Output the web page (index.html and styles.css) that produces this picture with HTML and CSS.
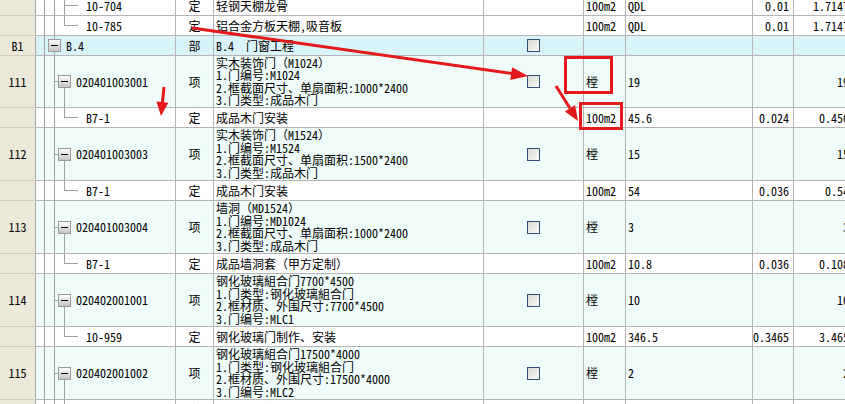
FILE: index.html
```html
<!DOCTYPE html>
<html lang="zh-CN">
<head>
<meta charset="utf-8">
<title>清单</title>
<link rel="stylesheet" href="styles.css">
</head>
<body>
<div class="grid">
  <div class="row">
    <div class="c num"></div>
    <div class="c tree t-de t-cont"><span>10-704</span></div>
    <div class="c type">定</div>
    <div class="c desc">轻钢天棚龙骨</div>
    <div class="c chk"></div>
    <div class="c unit">100m2</div>
    <div class="c qty">QDL</div>
    <div class="c v1">0.01</div>
    <div class="c v2">1.7147</div>
  </div>
  <div class="row">
    <div class="c num"></div>
    <div class="c tree t-de"><span>10-785</span></div>
    <div class="c type">定</div>
    <div class="c desc">铝合金方板天棚,吸音板</div>
    <div class="c chk"></div>
    <div class="c unit">100m2</div>
    <div class="c qty">QDL</div>
    <div class="c v1">0.01</div>
    <div class="c v2">1.7147</div>
  </div>
  <div class="row bu">
    <div class="c num">B1</div>
    <div class="c tree t-bu"><span class="exp"></span><span class="lbl">B.4</span></div>
    <div class="c type">部</div>
    <div class="c desc">B.4  门窗工程</div>
    <div class="c chk"><span class="cb"></span></div>
    <div class="c unit"></div>
    <div class="c qty"></div>
    <div class="c v1"></div>
    <div class="c v2"></div>
  </div>
  <div class="row xiang tall h52">
    <div class="c num">111</div>
    <div class="c tree t-xm"><span class="exp"></span><span class="lbl">020401003001</span></div>
    <div class="c type">项</div>
    <div class="c desc multi"><span>实木装饰门（M1024）</span><span>1.门编号:M1024</span><span>2.框截面尺寸、单扇面积:1000*2400</span><span>3.门类型:成品木门</span></div>
    <div class="c chk"><span class="cb"></span></div>
    <div class="c unit">樘</div>
    <div class="c qty">19</div>
    <div class="c v1"></div>
    <div class="c v2">19</div>
  </div>
  <div class="row">
    <div class="c num"></div>
    <div class="c tree t-de"><span>B7-1</span></div>
    <div class="c type">定</div>
    <div class="c desc">成品木门安装</div>
    <div class="c chk"></div>
    <div class="c unit">100m2</div>
    <div class="c qty">45.6</div>
    <div class="c v1">0.024</div>
    <div class="c v2">0.456</div>
  </div>
  <div class="row xiang tall">
    <div class="c num">112</div>
    <div class="c tree t-xm"><span class="exp"></span><span class="lbl">020401003003</span></div>
    <div class="c type">项</div>
    <div class="c desc multi"><span>实木装饰门（M1524）</span><span>1.门编号:M1524</span><span>2.框截面尺寸、单扇面积:1500*2400</span><span>3.门类型:成品木门</span></div>
    <div class="c chk"><span class="cb"></span></div>
    <div class="c unit">樘</div>
    <div class="c qty">15</div>
    <div class="c v1"></div>
    <div class="c v2">15</div>
  </div>
  <div class="row">
    <div class="c num"></div>
    <div class="c tree t-de"><span>B7-1</span></div>
    <div class="c type">定</div>
    <div class="c desc">成品木门安装</div>
    <div class="c chk"></div>
    <div class="c unit">100m2</div>
    <div class="c qty">54</div>
    <div class="c v1">0.036</div>
    <div class="c v2">0.54</div>
  </div>
  <div class="row xiang tall">
    <div class="c num">113</div>
    <div class="c tree t-xm"><span class="exp"></span><span class="lbl">020401003004</span></div>
    <div class="c type">项</div>
    <div class="c desc multi"><span>墙洞（MD1524）</span><span>1.门编号:MD1024</span><span>2.框截面尺寸、单扇面积:1000*2400</span><span>3.门类型:成品木门</span></div>
    <div class="c chk"><span class="cb"></span></div>
    <div class="c unit">樘</div>
    <div class="c qty">3</div>
    <div class="c v1"></div>
    <div class="c v2">3</div>
  </div>
  <div class="row">
    <div class="c num"></div>
    <div class="c tree t-de"><span>B7-1</span></div>
    <div class="c type">定</div>
    <div class="c desc">成品墙洞套（甲方定制）</div>
    <div class="c chk"></div>
    <div class="c unit">100m2</div>
    <div class="c qty">10.8</div>
    <div class="c v1">0.036</div>
    <div class="c v2">0.108</div>
  </div>
  <div class="row xiang tall">
    <div class="c num">114</div>
    <div class="c tree t-xm"><span class="exp"></span><span class="lbl">020402001001</span></div>
    <div class="c type">项</div>
    <div class="c desc multi"><span>钢化玻璃組合门7700*4500</span><span>1.门类型:钢化玻璃組合门</span><span>2.框材质、外围尺寸:7700*4500</span><span>3.门编号:MLC1</span></div>
    <div class="c chk"><span class="cb"></span></div>
    <div class="c unit">樘</div>
    <div class="c qty">10</div>
    <div class="c v1"></div>
    <div class="c v2">10</div>
  </div>
  <div class="row">
    <div class="c num"></div>
    <div class="c tree t-de"><span>10-959</span></div>
    <div class="c type">定</div>
    <div class="c desc">钢化玻璃门制作、安装</div>
    <div class="c chk"></div>
    <div class="c unit">100m2</div>
    <div class="c qty">346.5</div>
    <div class="c v1">0.3465</div>
    <div class="c v2">3.465</div>
  </div>
  <div class="row xiang tall">
    <div class="c num">115</div>
    <div class="c tree t-xm"><span class="exp"></span><span class="lbl">020402001002</span></div>
    <div class="c type">项</div>
    <div class="c desc multi"><span>钢化玻璃組合门17500*4000</span><span>1.门类型:钢化玻璃組合门</span><span>2.框材质、外围尺寸:17500*4000</span><span>3.门编号:MLC2</span></div>
    <div class="c chk"><span class="cb"></span></div>
    <div class="c unit">樘</div>
    <div class="c qty">2</div>
    <div class="c v1"></div>
    <div class="c v2">2</div>
  </div>
  <div class="row">
    <div class="c num"></div>
    <div class="c tree t-de"><span>10-959</span></div>
    <div class="c type">定</div>
    <div class="c desc">钢化玻璃门制作、安装</div>
    <div class="c chk"></div>
    <div class="c unit">100m2</div>
    <div class="c qty">700</div>
    <div class="c v1">0.35</div>
    <div class="c v2">7</div>
  </div>
</div>
<svg class="ann" width="845" height="404" viewBox="0 0 845 404" aria-hidden="true">
  <g stroke="#e3191b" stroke-width="3" fill="none">
    <line x1="192" y1="28" x2="512" y2="73.6"/>
    <line x1="556" y1="86" x2="570" y2="108.3"/>
    <line x1="164" y1="87" x2="162.4" y2="103"/>
    <rect x="565.5" y="57.5" width="46" height="35"/>
    <rect x="580.5" y="103.5" width="41" height="25"/>
  </g>
  <g fill="#e3191b">
    <polygon points="528,76 510.3,80 512.1,67.2"/>
    <polygon points="578,121 564.9,111.5 575.1,105.1"/>
    <polygon points="161,116 156.4,101.5 168.4,102.7"/>
  </g>
</svg>
</body>
</html>
```
FILE: styles.css
```css
* { box-sizing: border-box; margin: 0; padding: 0; }
html, body { width: 845px; height: 404px; overflow: hidden; background: #fff; }
body {
  display: flow-root;
  position: relative;
  font-family: "Noto Sans Mono CJK SC", "Noto Sans CJK SC", sans-serif;
  font-size: 12px;
  color: #000;
}
.grid { margin-top: -4px; width: 854px; }
.row {
  display: grid;
  grid-template-columns: 36px 140px 38px 270px 100px 42px 127px 41px 60px;
  height: 20px;
  background: #fff;
}
.row.tall { height: 53px; }
.row.h52 { height: 52px; }
.row.xiang { background: #effcf9; }
.row.bu { background: #d9f4f9; }

.c {
  border-right: 1px solid #b4b4b4;
  border-bottom: 1px solid #b4b4b4;
  display: flex;
  align-items: center;
  white-space: pre;
  overflow: hidden;
  line-height: 12px;
}
.num { background: #ece9d8; justify-content: center; border-bottom-color: #d2cebf; border-right-color: #a8a8a8; }
.type { justify-content: center; }
.desc { padding-left: 2px; }
.desc.multi { flex-direction: column; align-items: flex-start; justify-content: center; }
.desc.multi span { display: block; height: 12.5px; line-height: 12.5px; }
.chk { justify-content: center; }
.unit, .qty { padding-left: 2px; }
.v1, .v2 { justify-content: flex-end; padding-right: 4px; }

/* tree column */
.tree {
  --ln: #a0a0a0;
  background-repeat: no-repeat;
}
.t-de {
  padding-left: 50px;
  background-image: linear-gradient(var(--ln), var(--ln)), linear-gradient(var(--ln), var(--ln)),
    linear-gradient(var(--ln), var(--ln)), linear-gradient(var(--ln), var(--ln));
  background-size: 1px 100%, 1px 100%, 1px 50%, 14px 1px;
  background-position: 8px 0, 18px 0, 28px 0, 28px 50%;
}
.t-de.t-cont { background-size: 1px 100%, 1px 100%, 1px 100%, 14px 1px; }
.t-bu {
  padding-left: 12px;
  background-image: linear-gradient(var(--ln), var(--ln)), linear-gradient(var(--ln), var(--ln));
  background-size: 1px 100%, 1px 100%;
  background-position: 8px 0, 18px 0;
}
.t-xm {
  padding-left: 22px;
  background-image: linear-gradient(var(--ln), var(--ln)), linear-gradient(var(--ln), var(--ln)),
    linear-gradient(var(--ln), var(--ln)), linear-gradient(var(--ln), var(--ln));
  background-size: 1px 100%, 1px 100%, 1px 50%, 5px 1px;
  background-position: 8px 0, 18px 0, 28px 100%, 18px 50%;
}
.lbl { margin-left: 5px; }

.exp {
  flex: none;
  width: 13px;
  height: 13px;
  border: 1px solid #9a9a9a;
  background: linear-gradient(#ffffff, #c4c4c4);
  display: flex;
  align-items: center;
  justify-content: center;
}
.exp::before { content: ""; width: 7px; height: 1px; background: #000; }

.cb {
  width: 13px;
  height: 13px;
  border: 1px solid #34507a;
  background: linear-gradient(135deg, #d8d8d2, #fbfbf8);
}

.ann { position: absolute; left: 0; top: 0; pointer-events: none; }
```
